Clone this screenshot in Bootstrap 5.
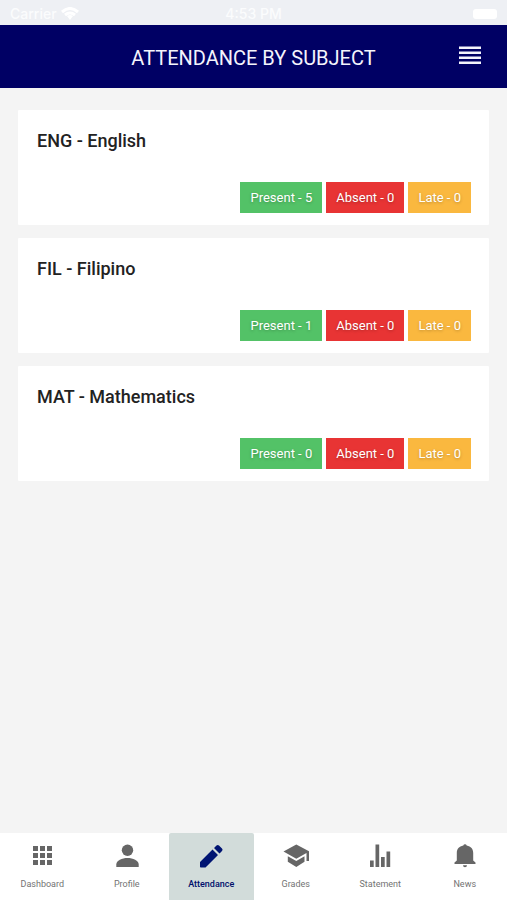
<!DOCTYPE html>
<html lang="en">
<head>
<meta charset="utf-8">
<meta name="viewport" content="width=device-width, initial-scale=1">
<title>Attendance by Subject</title>
<link rel="stylesheet" href="https://cdn.jsdelivr.net/npm/bootstrap@5.3.0/dist/css/bootstrap.min.css">
<style>
body { font-family: Roboto, "Liberation Sans", sans-serif; background: #f4f4f4; color: #222; }
.status-bar { height: 25px; padding: 2px 10px 0; background: #eef0f4; color: #fbfcfd; font-family: Inter, "Liberation Sans", sans-serif; font-size: 14px; font-weight: 500; line-height: 24px; }
.status-bar .battery { width: 24px; height: 10px; border-radius: 3px; background: #fff; }
.app-header { height: 63px; background: #000064; color: #f4f4fc; padding: 0 24px; }
.app-header h1 { font-size: 20px; line-height: 24px; font-weight: 400; padding-top: 2px; }
.side { width: 24px; }
.menu-btn { color: #f4f4fc; }
.subjects { padding: 22px 18px; gap: 13px; }
.subject { height: 115px; border: 0; border-radius: 1px; padding: 20px 18px 12px 19px; }
.subject h2 { font-size: 18px; line-height: 22px; font-weight: 500; }
.tallies { gap: 4px; }
.tally { height: 31px; line-height: 32px; font-size: 13px; padding: 0 10px; color: #fff; text-shadow: 0 1px 3px rgba(0,0,0,.25); }
.present { background: #53c267; }
.absent { background: #e83434; }
.late { background: #fab83f; }
.tab-bar { height: 67px; background: #fff; }
.tab { font-size: 9px; line-height: 12px; color: #737373; padding-top: 9px; gap: 8px; flex: 1 1 0; }
.tab svg { fill: #666; }
.tab.active { background: #d2dcda; color: #000f6b; font-weight: 500; border-radius: 2px 2px 0 0; }
.tab.active svg { fill: #001472; }
</style>
</head>
<body>
<div class="d-flex flex-column min-vh-100">
  <div class="status-bar d-flex align-items-center">
    <div class="d-flex align-items-center gap-1 col"><span>Carrier</span>
      <svg width="18" height="13" viewBox="0 0 18 13" fill="none" stroke="#fff" stroke-width="3" aria-hidden="true"><path d="M1 5Q9-2 17 5M4 8Q9 4 14 8"/><path d="M6 9Q9 7 12 9L9 13Z" fill="#fff" stroke="none"/></svg>
    </div>
    <span>4:53 PM</span>
    <div class="col d-flex justify-content-end"><span class="battery"></span></div>
  </div>
  <header class="app-header d-flex align-items-center justify-content-between">
    <span class="side"></span>
    <h1 class="m-0">ATTENDANCE BY SUBJECT</h1>
    <button type="button" class="btn menu-btn side p-0 border-0 d-flex" aria-label="Menu">
      <svg width="24" height="24" viewBox="0 0 24 24" fill="currentColor"><path d="M0 1.500h22v2.500H0zM0 6.500h22v2.500H0zM0 11.500h22v2.500H0zM0 16.500h22v2.500H0z"/></svg>
    </button>
  </header>
  <main class="subjects d-flex flex-column flex-grow-1">
    <section class="card subject justify-content-between">
      <h2 class="m-0">ENG - English</h2>
      <div class="tallies d-flex justify-content-end"><span class="tally present">Present - 5</span><span class="tally absent">Absent - 0</span><span class="tally late">Late - 0</span></div>
    </section>
    <section class="card subject justify-content-between">
      <h2 class="m-0">FIL - Filipino</h2>
      <div class="tallies d-flex justify-content-end"><span class="tally present">Present - 1</span><span class="tally absent">Absent - 0</span><span class="tally late">Late - 0</span></div>
    </section>
    <section class="card subject justify-content-between">
      <h2 class="m-0">MAT - Mathematics</h2>
      <div class="tallies d-flex justify-content-end"><span class="tally present">Present - 0</span><span class="tally absent">Absent - 0</span><span class="tally late">Late - 0</span></div>
    </section>
  </main>
  <nav class="tab-bar d-flex sticky-bottom" aria-label="Main">
    <a href="#dashboard" class="tab d-flex flex-column align-items-center text-decoration-none">
      <svg width="28" height="28" viewBox="0 0 28 28" aria-hidden="true"><path d="M5 4h5v5H5zM12 4h5v5h-5zM19 4h5v5h-5zM5 11h5v5H5zM12 11h5v5h-5zM19 11h5v5h-5zM5 18h5v5H5zM12 18h5v5h-5zM19 18h5v5h-5z"/></svg>Dashboard</a>
    <a href="#profile" class="tab d-flex flex-column align-items-center text-decoration-none">
      <svg width="28" height="28" viewBox="0 0 28 28" aria-hidden="true"><circle cx="14.500" cy="8.300" r="5.700"/><path d="M3.300 25v-2.500C3.300 18.500 9 16 14.500 16s11.200 2.500 11.200 6.500V25z"/></svg>Profile</a>
    <a href="#attendance" class="tab active d-flex flex-column align-items-center text-decoration-none" aria-current="page">
      <svg width="28" height="28" viewBox="0 0 28 28" aria-hidden="true"><path d="M3 20L15.500 7.500l5.500 5.500L8.500 25.500H3.800a.8.800 0 0 1-.8-.8zM17 6l2.500-2.500a1.800 1.800 0 0 1 2.500 0l3 3a1.800 1.800 0 0 1 0 2.500l-2.500 2.500z"/></svg>Attendance</a>
    <a href="#grades" class="tab d-flex flex-column align-items-center text-decoration-none">
      <svg width="28" height="28" viewBox="0 0 28 28" aria-hidden="true"><path d="M14.300 2.500L27 9.300V19h-2.500v-8L14.300 16.800 1.500 9.500zM5.800 14.300l8.500 4.800 8.200-4.800v5.400l-8.200 5.300-8.500-5.300z"/></svg>Grades</a>
    <a href="#statement" class="tab d-flex flex-column align-items-center text-decoration-none">
      <svg width="28" height="28" viewBox="0 0 28 28" aria-hidden="true"><path d="M4 18.500h3.700V25H4zM9.500 2.500h3.700V25H9.500zM15 15h3.700v10H15zM20.500 9.500h3.700V25h-3.700z"/></svg>Statement</a>
    <a href="#news" class="tab d-flex flex-column align-items-center text-decoration-none">
      <svg width="28" height="28" viewBox="0 0 28 28" aria-hidden="true"><path d="M12.300 3.500a1.800 1.800 0 0 1 3.400 0C20 4.300 22.200 7 22.200 11v7.500l2.300 2v1.500h-21v-1.500l2.300-2V11c0-4 2.200-6.700 6.500-7.500zM12 23.300h4a2 2 0 0 1-4 0z"/></svg>News</a>
  </nav>
</div>
<script src="https://cdn.jsdelivr.net/npm/bootstrap@5.3.0/dist/js/bootstrap.bundle.min.js"></script>
</body>
</html>
